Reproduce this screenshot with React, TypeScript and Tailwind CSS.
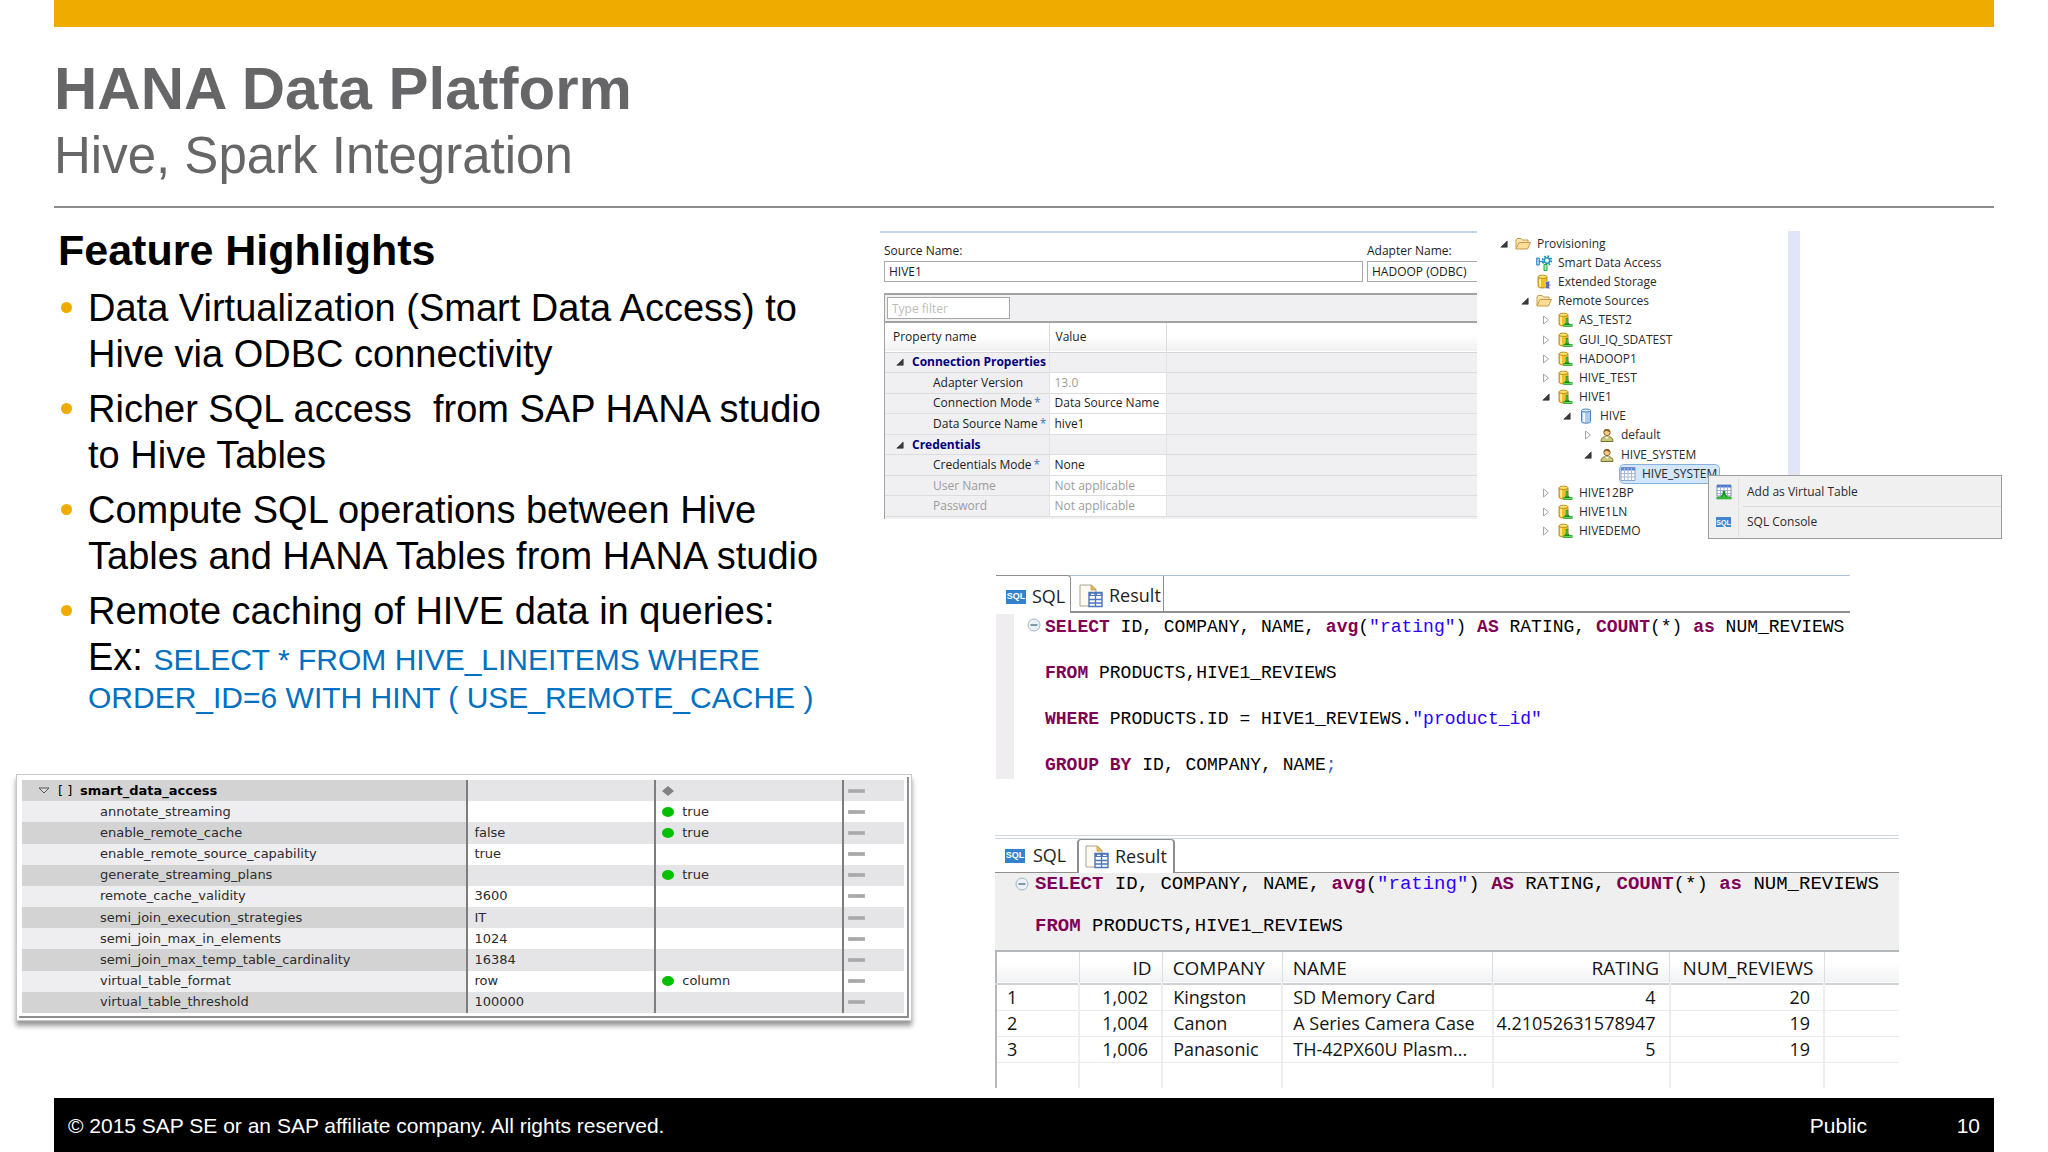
import React from 'react';

type TreeNode = {
    label: string;
    level: number;
    icon: 'folder' | 'smart' | 'storage' | 'remote' | 'database' | 'user' | 'table';
    state?: 'open' | 'closed';
    selected?: boolean;
};

const treeNodes: TreeNode[] = [
    { label: 'Provisioning', level: 0, icon: 'folder', state: 'open' },
    { label: 'Smart Data Access', level: 1, icon: 'smart' },
    { label: 'Extended Storage', level: 1, icon: 'storage' },
    { label: 'Remote Sources', level: 1, icon: 'folder', state: 'open' },
    { label: 'AS_TEST2', level: 2, icon: 'remote', state: 'closed' },
    { label: 'GUI_IQ_SDATEST', level: 2, icon: 'remote', state: 'closed' },
    { label: 'HADOOP1', level: 2, icon: 'remote', state: 'closed' },
    { label: 'HIVE_TEST', level: 2, icon: 'remote', state: 'closed' },
    { label: 'HIVE1', level: 2, icon: 'remote', state: 'open' },
    { label: 'HIVE', level: 3, icon: 'database', state: 'open' },
    { label: 'default', level: 4, icon: 'user', state: 'closed' },
    { label: 'HIVE_SYSTEM', level: 4, icon: 'user', state: 'open' },
    { label: 'HIVE_SYSTEM', level: 5, icon: 'table', selected: true },
    { label: 'HIVE12BP', level: 2, icon: 'remote', state: 'closed' },
    { label: 'HIVE1LN', level: 2, icon: 'remote', state: 'closed' },
    { label: 'HIVEDEMO', level: 2, icon: 'remote', state: 'closed' },
];

const indents = ['pl-[19px]', 'pl-[40px]', 'pl-[61px]', 'pl-[82px]', 'pl-[103px]', 'pl-[124px]'];

const properties = [
    { name: 'Connection Properties', group: true },
    { name: 'Adapter Version', value: '13.0', mutedValue: true },
    { name: 'Connection Mode', value: 'Data Source Name', required: true },
    { name: 'Data Source Name', value: 'hive1', required: true },
    { name: 'Credentials', group: true },
    { name: 'Credentials Mode', value: 'None', required: true },
    { name: 'User Name', value: 'Not applicable', muted: true, mutedValue: true },
    { name: 'Password', value: 'Not applicable', muted: true, mutedValue: true },
];

const settings = [
    { name: 'annotate_streaming', system: '', host: 'true' },
    { name: 'enable_remote_cache', system: 'false', host: 'true' },
    { name: 'enable_remote_source_capability', system: 'true', host: '' },
    { name: 'generate_streaming_plans', system: '', host: 'true' },
    { name: 'remote_cache_validity', system: '3600', host: '' },
    { name: 'semi_join_execution_strategies', system: 'IT', host: '' },
    { name: 'semi_join_max_in_elements', system: '1024', host: '' },
    { name: 'semi_join_max_temp_table_cardinality', system: '16384', host: '' },
    { name: 'virtual_table_format', system: 'row', host: 'column' },
    { name: 'virtual_table_threshold', system: '100000', host: '' },
];

const results = [
    ['1', '1,002', 'Kingston', 'SD Memory Card', '4', '20'],
    ['2', '1,004', 'Canon', 'A Series Camera Case', '4.21052631578947', '19'],
    ['3', '1,006', 'Panasonic', 'TH-42PX60U Plasm...', '5', '19'],
];

const OpenArrow = () => (
    <svg viewBox="0 0 8 8" className="h-2 w-2">
        <path d="M7.2 1v6.2H.8z" fill="#3c3c3c" stroke="#222" strokeWidth=".6" />
    </svg>
);

const ClosedArrow = () => (
    <svg viewBox="0 0 8 10" className="h-[10px] w-2">
        <path d="M1.5 1v8l5-4z" fill="#fff" stroke="#a6a6a6" />
    </svg>
);

const Cylinder = () => (
    <>
        <path d="M2 3v9c0 1.4 2 2 4.5 2S11 13.4 11 12V3z" fill="#f0c024" stroke="#a97d12" strokeWidth=".8" />
        <path d="M3.2 4v8.3l1.8.8V4.5z" fill="#fdf0a0" />
        <ellipse cx="6.5" cy="2.8" rx="4.5" ry="1.7" fill="#fbe36a" stroke="#a97d12" strokeWidth=".8" />
    </>
);

const TreeIcon: React.FC<{ name: TreeNode['icon'] }> = ({ name }) => (
    <svg viewBox="0 0 16 16" className="h-4 w-4 shrink-0">
        {name === 'folder' && (
            <>
                <path d="M1 13V4l1-1.5h4L7.5 4H13v3" fill="#fbe6ae" stroke="#c79a4b" />
                <path d="M1 13l3-6.5h11.5L12.5 13z" fill="#fbdd97" stroke="#c79a4b" strokeLinejoin="round" />
            </>
        )}
        {name === 'smart' && (
            <>
                <path d="M.7 3h2.6v7H.7z" fill="#b8d8f4" stroke="#2d7fc1" />
                <path d="M3.5 6.5h4" stroke="#2d7fc1" strokeWidth="1.2" />
                <circle cx="11" cy="5.5" r="4.3" fill="none" stroke="#1c93b4" strokeWidth="2" strokeDasharray="1.7 1.67" />
                <circle cx="11" cy="5.5" r="2.7" fill="#e9f8fb" stroke="#1c93b4" strokeWidth="1.4" />
                <path d="M8 9.5h3v6H8z" fill="#a5ecae" stroke="#2aa544" />
            </>
        )}
        {name === 'storage' && (
            <>
                <Cylinder />
                <path d="M9 8l5-1-1 3 2 1-2 1 1 3-5-1 1-3z" fill="#5b63b5" stroke="#ececff" strokeWidth=".5" />
            </>
        )}
        {name === 'remote' && (
            <>
                <Cylinder />
                <path d="M10 6v5.5M6.5 13.5h9M8.5 13.5l1.5-3 2 3" fill="none" stroke="#138a1e" strokeWidth="2.4" />
                <path d="M10 6.5v5M7 13.5h8" fill="none" stroke="#59dd4c" strokeWidth="1" />
            </>
        )}
        {name === 'database' && (
            <>
                <path d="M3.5 2.5v11c0 1 2 1.7 4.5 1.7s4.5-.7 4.5-1.7v-11z" fill="#a9cdf3" stroke="#4b83c4" />
                <path d="M5 4.5v9.3l2 .4V4.8z" fill="#eef7ff" />
                <ellipse cx="8" cy="2.5" rx="4.5" ry="1.5" fill="#dcecfc" stroke="#4b83c4" />
            </>
        )}
        {name === 'user' && (
            <>
                <path d="M2 14.5c0-3.5 2-5 6-5s6 1.5 6 5z" fill="#c9c77a" stroke="#77702b" />
                <path d="M6 9.5l2 2.5 2-2.5z" fill="#fff" />
                <circle cx="8" cy="5.5" r="3.2" fill="#f3c98b" stroke="#8a6429" />
                <path d="M4.8 5c0-4 6.4-4 6.4 0-2 .2-3-1.2-3.5-1.2S6 5 4.8 5z" fill="#8a6429" />
            </>
        )}
        {name === 'table' && (
            <>
                <path d="M1 1.5h14v13H1z" fill="#fff" stroke="#8aa0c8" />
                <path d="M1 1.5h14v3H1z" fill="#5b86d4" />
                <path d="M4.5 2v12.5M8 2v12.5M11.5 2v12.5M1 7.5h14M1 11h14" stroke="#a9b9da" />
            </>
        )}
    </svg>
);

const VirtualTableIcon = () => (
    <svg viewBox="0 0 16 16" className="h-4 w-4">
        <path d="M1 1h14v11H1z" fill="#fff" stroke="#7f93bd" />
        <path d="M1 1h14v2.5H1z" fill="#4b79cf" />
        <path d="M4.5 2v10M8 2v10M11.5 2v10M1 6.5h14M1 9.5h14" stroke="#8ea3cf" strokeWidth=".8" />
        <path d="M8 7v3M.5 14h15" stroke="#16911f" strokeWidth="2.6" />
        <path d="M4.5 14L8 9l3.5 5z" fill="#35c435" stroke="#16911f" strokeWidth="1.4" />
        <path d="M1 14h14" stroke="#4fd64a" />
    </svg>
);

const ResultIcon = () => (
    <svg viewBox="0 0 24 24" className="h-6 w-6 shrink-0">
        <path d="M1 1h11.5L17 5.5V22H1z" fill="#fdfbf1" stroke="#a9a48c" />
        <path d="M12 1l5 5h-5z" fill="#e8c25a" stroke="#c79a3a" strokeWidth=".8" />
        <path d="M10 8.5h13v14H10z" fill="#fff" stroke="#4d76b8" strokeWidth="1.4" />
        <path d="M10 8.5h13V12H10z" fill="#4d76b8" />
        <path d="M12 10.3h3.5M18 10.3h3.5" stroke="#fff" strokeWidth="1.2" />
        <path d="M16.5 9v13M10 15.5h13M10 19h13" stroke="#4d76b8" strokeWidth="1.3" />
    </svg>
);

const SqlBadge = () => (
    <span className="flex h-[14px] w-5 items-center justify-center bg-[#3481cd] font-['Liberation_Sans',sans-serif] text-[9px] leading-none font-bold text-white">
        SQL
    </span>
);

const Fold = () => (
    <svg viewBox="0 0 14 14" className="h-[14px] w-[14px]">
        <circle cx="7" cy="7" r="6" fill="#eaf2f7" stroke="#a3b5c2" />
        <path d="M3.5 7h7" stroke="#4f7186" strokeWidth="1.4" />
    </svg>
);

const Kw: React.FC<{ children: React.ReactNode }> = ({ children }) => (
    <span className="font-bold text-[#7f0055]">{children}</span>
);

const Str: React.FC<{ children: React.ReactNode }> = ({ children }) => (
    <span className="text-[#2a00ff]">{children}</span>
);

const SelectLine = () => (
    <>
        <Kw>SELECT</Kw> ID, COMPANY, NAME, <Kw>avg</Kw>(<Str>"rating"</Str>) <Kw>AS</Kw> RATING, <Kw>COUNT</Kw>(*) <Kw>as</Kw> NUM_REVIEWS
    </>
);

const Bullet: React.FC<{ children: React.ReactNode }> = ({ children }) => (
    <li className="flex items-start">
        <span className="mt-[17px] mr-4 ml-[3px] h-[11px] w-[11px] shrink-0 rounded-full bg-[#f0ab00]" />
        <div>{children}</div>
    </li>
);

const Highlights = () => (
    <section className="pt-[18px] pl-[58px] text-black">
        <h2 className="text-[43px] leading-[48px] font-bold">Feature Highlights</h2>
        <ul className="mt-[11px] flex flex-col gap-[9px] text-[38px] leading-[46px] whitespace-pre">
            <Bullet>{'Data Virtualization (Smart Data Access) to\nHive via ODBC connectivity'}</Bullet>
            <Bullet>{'Richer SQL access  from SAP HANA studio\nto Hive Tables'}</Bullet>
            <Bullet>{'Compute SQL operations between Hive\nTables and HANA Tables from HANA studio'}</Bullet>
            <Bullet>
                <p>Remote caching of HIVE data in queries:</p>
                <p className="flex items-baseline">
                    <span>{'Ex: '}</span>
                    <span className="text-[30px] leading-none text-[#0070c0]">SELECT * FROM HIVE_LINEITEMS WHERE</span>
                </p>
                <p className="text-[30px] leading-[36px] text-[#0070c0]">ORDER_ID=6 WITH HINT ( USE_REMOTE_CACHE )</p>
            </Bullet>
        </ul>
    </section>
);

const Dash = () => <span className="block h-1 w-[17px] border border-[#b4b4b4] bg-[#a8a8a8]" />;

const SettingsTable = () => (
    <section className="mt-[58px] -mr-8 ml-4 border border-[#c8c8c8] bg-white p-[2px] shadow-[0_5px_5px_rgba(0,0,0,0.4)]">
        <div className="border-r-2 border-b-2 border-[#8f8f8f] p-[3px]">
            <table className="h-[233px] w-full table-fixed border-collapse font-['DejaVu_Sans',sans-serif] text-[13px] leading-[14px] text-[#2c2c2c]">
                <colgroup>
                    <col className="w-[50.5%]" />
                    <col className="w-[21.3%]" />
                    <col className="w-[21.3%]" />
                    <col />
                </colgroup>
                <tbody>
                    <tr className="bg-[#e5e4e6]">
                        <th scope="row" className="border-r-2 border-[#7d7d7d] bg-[#d3d3d4] p-0 text-left font-bold text-black">
                            <span className="flex items-center pl-4">
                                <svg viewBox="0 0 12 8" className="h-2 w-3">
                                    <path d="M1 1h10L6 6z" fill="#ddd" stroke="#555" />
                                </svg>
                                <span className="ml-2 w-[22px] font-normal">[ ]</span>
                                smart_data_access
                            </span>
                        </th>
                        <td className="border-r-2 border-[#7d7d7d] p-0" />
                        <td className="border-r-2 border-[#7d7d7d] p-0 pl-[6px]">
                            <svg viewBox="0 0 12 10" className="h-[10px] w-3">
                                <path d="M6 0l6 5-6 5-6-5z" fill="#828282" />
                            </svg>
                        </td>
                        <td className="p-0 pl-1"><Dash /></td>
                    </tr>
                    {settings.map((row, i) => (
                        <tr key={row.name} className={i % 2 ? 'bg-[#e5e4e6]' : 'bg-white'}>
                            <th
                                scope="row"
                                className={`border-r-2 border-[#7d7d7d] p-0 pl-[78px] text-left font-normal ${i % 2 ? 'bg-[#d3d3d4]' : 'bg-[#eeedef]'}`}
                            >
                                {row.name}
                            </th>
                            <td className="border-r-2 border-[#7d7d7d] p-0 pl-[6px]">{row.system}</td>
                            <td className="border-r-2 border-[#7d7d7d] p-0 pl-[6px]">
                                {row.host && (
                                    <span className="flex items-center gap-2">
                                        <span className="h-[10px] w-3 rounded-[50%] bg-[#00c000]" />
                                        {row.host}
                                    </span>
                                )}
                            </td>
                            <td className="p-0 pl-1"><Dash /></td>
                        </tr>
                    ))}
                </tbody>
            </table>
        </div>
    </section>
);

const SourceEditor = () => (
    <section className="h-[288px] overflow-hidden border-t-2 border-[#c3d5e8] pl-1 font-['Open_Sans',sans-serif] text-[12px] text-[#1c1c1c]">
        <div className="flex gap-1 pt-2">
            <label className="flex flex-[479] flex-col leading-[20px]">
                <span>Source Name:</span>
                <input className="h-[21px] w-full border border-[#a9a9a9] bg-white px-1" defaultValue="HIVE1" />
            </label>
            <label className="flex flex-[110] flex-col leading-[20px]">
                <span>Adapter Name:</span>
                <input className="h-[21px] w-full border border-r-0 border-[#a9a9a9] bg-white pl-1" defaultValue="HADOOP (ODBC)" />
            </label>
        </div>
        <div className="mt-[11px] border-t-2 border-l border-[#a3a3a3] bg-[#f0eff1] pb-[3px]">
            <div className="flex h-[28px] items-center border-b-2 border-[#a3a3a3] pl-[2px]">
                <input aria-label="Type filter" placeholder="Type filter" className="h-[22px] w-[123px] border border-[#a9a9a9] bg-white px-1 placeholder:text-[#bdbdbd]" />
            </div>
            <table className="h-[194px] w-full table-fixed border-collapse leading-[16px]">
                <colgroup>
                    <col className="w-[164px]" />
                    <col className="w-[117px]" />
                    <col />
                </colgroup>
                <thead>
                    <tr className="h-[29px] border-b border-[#d5d5d5] bg-linear-to-b from-white from-40% to-[#f1f1f3] text-left">
                        <th className="border-r border-[#dedede] p-0 pl-2 font-normal">Property name</th>
                        <th className="border-r border-[#dedede] p-0 pl-[6px] font-normal">Value</th>
                        <th className="p-0" />
                    </tr>
                </thead>
                <tbody>
                    {properties.map((p) => (
                        <tr key={p.name} className="border-b border-[#dddde0] whitespace-nowrap">
                            <td className={p.muted ? 'border-r border-[#e2e2e2] p-0 text-[#9c9c9c]' : 'border-r border-[#e2e2e2] p-0'}>
                                {p.group ? (
                                    <span className="flex items-center gap-2 pl-[11px] font-bold text-[#00007f]">
                                        <OpenArrow />
                                        {p.name}
                                    </span>
                                ) : (
                                    <span className="pl-[48px]">
                                        {p.name}
                                        {p.required && <span className="pl-0.5 text-[#3e7ac0]">*</span>}
                                    </span>
                                )}
                            </td>
                            <td className={`border-r border-[#e2e2e2] p-0 pl-[5px] ${p.group ? '' : 'bg-white'} ${p.mutedValue ? 'text-[#9c9c9c]' : ''}`}>
                                {p.value}
                            </td>
                            <td className="p-0" />
                        </tr>
                    ))}
                </tbody>
            </table>
        </div>
    </section>
);

const SourceTree = () => (
    <section className="relative h-[310px] font-['Open_Sans',sans-serif] text-[12px] leading-[18px] text-[#2a2a2a]">
        <div className="flex h-full">
            <ul className="flex h-full w-[311px] flex-col pt-[3px]">
                {treeNodes.map((node, i) => (
                    <li key={i} className={`flex flex-1 items-center ${indents[node.level]}`}>
                        <span className="flex w-[19px] items-center pl-1">
                            {node.state && (
                                <button aria-label={node.label}>{node.state === 'open' ? <OpenArrow /> : <ClosedArrow />}</button>
                            )}
                        </span>
                        <span
                            className={
                                node.selected
                                    ? 'flex items-center gap-1.5 rounded-sm bg-[#d3e6fa] pr-0.5 outline outline-[#86b2e2]'
                                    : 'flex items-center gap-1.5'
                            }
                        >
                            <TreeIcon name={node.icon} />
                            {node.label}
                        </span>
                    </li>
                ))}
            </ul>
            <div className="h-[244px] w-3 bg-[#e1e5f5]" />
        </div>
        <div role="menu" className="absolute top-[244px] left-[231px] w-[294px] border border-[#9c9c9c] bg-[#f1f0f1] py-px">
            <button role="menuitem" className="flex h-[29px] w-full items-center">
                <span className="flex h-full w-[30px] items-center justify-center border-r border-[#e2e2e2]"><VirtualTableIcon /></span>
                <span className="pl-2">Add as Virtual Table</span>
            </button>
            <div className="ml-[34px] border-t border-[#d8d8d8]" />
            <button role="menuitem" className="flex h-[30px] w-full items-center">
                <span className="flex h-full w-[30px] items-center justify-center border-r border-[#e2e2e2]">
                    <span className="flex h-[10px] w-[15px] items-center justify-center bg-[#3f86cd] font-['Liberation_Sans',sans-serif] text-[7px] leading-none font-bold text-white">SQL</span>
                </span>
                <span className="pl-2">SQL Console</span>
            </button>
        </div>
    </section>
);

const SqlEditor = () => (
    <section className="mt-[34px] mr-[198px] ml-[116px]">
        <div role="tablist" className="flex h-[38px] border-t border-[#a9c1d6] font-['Open_Sans',sans-serif] text-[18px] text-[#1e1e1e]">
            <button role="tab" aria-selected="true" className="-mt-px flex w-[75px] items-center gap-1.5 rounded-tr border-t border-r border-[#8e8e8e] bg-white pt-1 pl-[10px]">
                <SqlBadge />
                SQL
            </button>
            <button role="tab" aria-selected="false" className="flex w-[93px] items-center gap-1.5 border-r border-b-2 border-[#8e8e8e] pt-1 pl-2">
                <ResultIcon />
                Result
            </button>
            <div className="flex-1 border-b-2 border-[#8e8e8e]" />
        </div>
        <div className="mt-px flex h-[165px]">
            <div className="w-[18px] bg-[#efedf0]" />
            <div className="flex w-[31px] justify-end pt-[4px] pr-1"><Fold /></div>
            <pre className="-mt-[10px] font-['Liberation_Mono',monospace] text-[18px] leading-[46px] text-black">
                <SelectLine />{'\n'}
                <Kw>FROM</Kw> PRODUCTS,HIVE1_REVIEWS{'\n'}
                <Kw>WHERE</Kw> PRODUCTS.ID = HIVE1_REVIEWS.<Str>"product_id"</Str>{'\n'}
                <Kw>GROUP BY</Kw> ID, COMPANY, NAME<span className="text-[#3f5fbf]">;</span>
            </pre>
        </div>
    </section>
);

const ResultViewer = () => (
    <section className="mt-[56px] mr-[149px] ml-[115px]">
        <div className="h-1 border-y border-[#cfd7e3]" />
        <div role="tablist" className="flex h-[34px] font-['Open_Sans',sans-serif] text-[18px] text-[#1e1e1e]">
            <button role="tab" aria-selected="false" className="flex w-[82px] items-center gap-2 border-b border-[#8e8e8e] pl-[10px]">
                <SqlBadge />
                SQL
            </button>
            <button role="tab" aria-selected="true" className="flex w-[98px] items-center gap-1.5 rounded-t border-x-2 border-t border-[#8e8e8e] bg-white pl-[6px]">
                <ResultIcon />
                Result
            </button>
            <div className="flex-1 border-b border-[#8e8e8e]" />
        </div>
        <div className="flex h-[77px] bg-[#f0eff0]">
            <div className="flex w-[40px] justify-end pt-[4px] pr-[6px]"><Fold /></div>
            <pre className="-mt-[10px] font-['Liberation_Mono',monospace] text-[19px] leading-[42px] text-black">
                <SelectLine />{'\n'}
                <Kw>FROM</Kw> PRODUCTS,HIVE1_REVIEWS
            </pre>
        </div>
        <table className="w-full table-fixed border-collapse border-t-2 border-l-2 border-[#b4b8bc] font-['Open_Sans',sans-serif] text-[18px] leading-[24px] whitespace-nowrap text-[#141414]">
            <colgroup>
                <col className="w-[9.2%]" />
                <col className="w-[9.2%]" />
                <col className="w-[13.3%]" />
                <col className="w-[23.3%]" />
                <col className="w-[19.6%]" />
                <col className="w-[17.1%]" />
                <col />
            </colgroup>
            <thead>
                <tr className="h-[33px] border-b-2 border-[#cfd1d4] bg-linear-to-b from-white from-40% to-[#f1f2f4] text-[19px]">
                    <th className="border-r border-[#dcdee2] p-0" />
                    <th className="border-r border-[#dcdee2] p-0 pr-[10px] text-right font-normal">ID</th>
                    <th className="border-r border-[#dcdee2] p-0 pl-[10px] text-left font-normal">COMPANY</th>
                    <th className="border-r border-[#dcdee2] p-0 pl-[10px] text-left font-normal">NAME</th>
                    <th className="border-r border-[#dcdee2] p-0 pr-[10px] text-right font-normal">RATING</th>
                    <th className="border-r border-[#dcdee2] p-0 pr-[10px] text-right font-normal">NUM_REVIEWS</th>
                    <th className="p-0" />
                </tr>
            </thead>
            <tbody>
                {results.map((row) => (
                    <tr key={row[0]} className="h-[26px] border-b border-[#e9ebee]">
                        <td className="border-r-2 border-[#eeeef1] p-0 pl-[10px]">{row[0]}</td>
                        <td className="border-r-2 border-[#eeeef1] p-0 pr-[13px] text-right">{row[1]}</td>
                        <td className="border-r-2 border-[#eeeef1] p-0 pl-[10px]">{row[2]}</td>
                        <td className="border-r-2 border-[#eeeef1] p-0 pl-[10px]">{row[3]}</td>
                        <td className="border-r-2 border-[#eeeef1] p-0 pr-[13px] text-right">{row[4]}</td>
                        <td className="border-r-2 border-[#eeeef1] p-0 pr-[13px] text-right">{row[5]}</td>
                        <td className="p-0" />
                    </tr>
                ))}
                <tr className="h-[26px]">
                    {results[0].map((_, i) => (
                        <td key={i} className="border-r-2 border-[#eeeef1] p-0" />
                    ))}
                    <td className="p-0" />
                </tr>
            </tbody>
        </table>
    </section>
);

const App: React.FC = () => {
    return (
        <div className="flex min-h-screen flex-col overflow-hidden bg-white font-['Liberation_Sans',Arial,sans-serif]">
            <header className="mx-[54px] border-b-2 border-[#8d8d8f] pb-[17px] text-[#666668]">
                <div className="h-[27px] bg-[#f0ab00]" />
                <h1 className="mt-7 text-[60px] leading-[68px] font-bold">HANA Data Platform</h1>
                <p className="text-[51px] leading-[66px]">Hive, Spark Integration</p>
            </header>
            <main className="grid flex-1 grid-cols-[880fr_1168fr]">
                <div className="min-w-0">
                    <Highlights />
                    <SettingsTable />
                </div>
                <div className="min-w-0 pt-[23px]">
                    <div className="grid grid-cols-[597fr_571fr]">
                        <SourceEditor />
                        <SourceTree />
                    </div>
                    <SqlEditor />
                    <ResultViewer />
                </div>
            </main>
            <footer className="mx-[54px] flex h-[54px] items-center bg-black px-[14px] pt-0.5 text-[21px] text-white">
                <span className="flex-1">© 2015 SAP SE or an SAP affiliate company. All rights reserved.</span>
                <span>Public</span>
                <span className="w-[113px] text-right">10</span>
            </footer>
        </div>
    );
};

export default App;
